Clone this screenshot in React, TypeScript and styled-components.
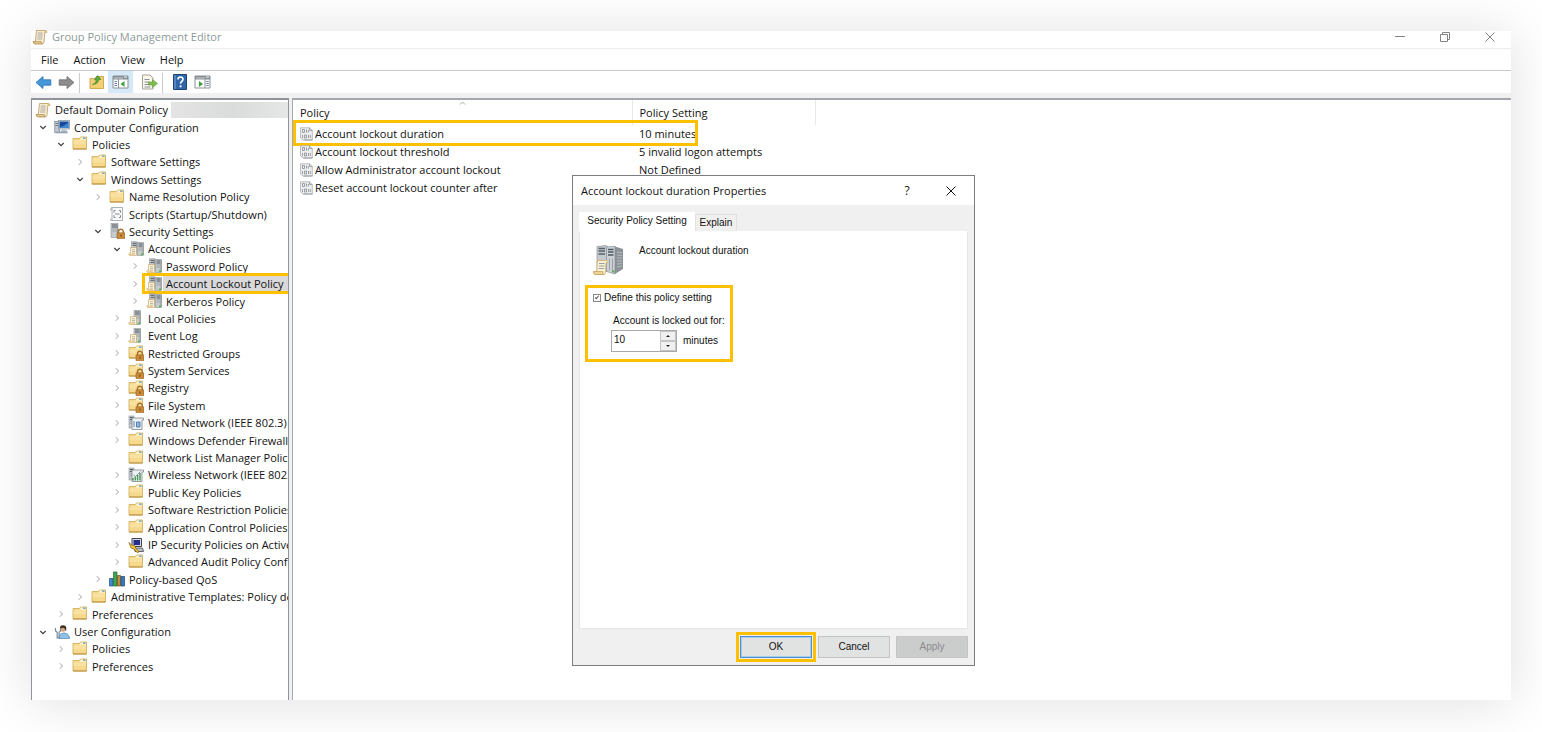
import React, { useState } from "react";
import styled, { createGlobalStyle } from "styled-components";

const ui = `"Open Sans", "Noto Sans", sans-serif`;
const classic = `"Liberation Sans", Arial, sans-serif`;
const accent = "#ffc000";

const GlobalStyle = createGlobalStyle`
  *, *::before, *::after { box-sizing: border-box; }
  body { margin: 0; background: #fff; color: #111; font: 11px/16px ${ui}; }
  button, input { font: inherit; color: inherit; margin: 0; padding: 0; border: 0; background: none; border-radius: 0; }
  svg { display: block; flex: none; }
`;

const Page = styled.div`
  display: flex;
  min-height: 100vh;
  padding: 31px 31px 32px;
`;

const AppWindow = styled.main`
  position: relative;
  flex: 1;
  min-width: 0;
  display: flex;
  flex-direction: column;
  background: #fff;
  box-shadow: 0 2px 50px rgba(0, 0, 0, 0.13);
`;

const TitleBar = styled.header`
  display: flex;
  align-items: center;
  gap: 4px;
  height: 18px;
  padding: 0 15px 5px 1px;
  border-bottom: 1px solid #ececec;
`;

const AppTitle = styled.h1`
  flex: 1;
  margin: 0;
  font-size: 11px;
  font-weight: 400;
  line-height: 14px;
  color: #8d9a9a;
`;

const WindowControls = styled.div`
  display: flex;
  gap: 33px;
`;

const ControlButton = styled.button`
  width: 12px;
  height: 12px;
  color: #858585;
`;

const MenuBar = styled.nav`
  display: flex;
  align-items: center;
  gap: 15px;
  height: 22px;
  padding-left: 10px;
  border-bottom: 1px solid #c3c5c9;
`;

const Toolbar = styled.div`
  display: flex;
  align-items: stretch;
  height: 22px;
  padding-left: 1px;
`;

const ToolButton = styled.button<{ $active?: boolean }>`
  display: flex;
  align-items: center;
  justify-content: center;
  width: ${(p) => (p.$active ? "25px" : "23px")};
  background: ${(p) => (p.$active ? "#d5e9f8" : "transparent")};
`;

const ToolDivider = styled.span`
  width: 1px;
  margin: 2px 5px 0 1px;
  background: #c9cacd;
`;

const ToolGroup = styled.div`
  display: flex;
  & + & {
    margin-left: 5px;
  }
`;

const Panes = styled.div`
  flex: 1;
  display: flex;
  gap: 3px;
  border-top: 5px solid #f0f0f0;
  background: #f0f0f0;
`;

const TreePane = styled.aside`
  flex: none;
  display: flex;
  width: 258px;
  padding: 1px 0 25px 3px;
  border: solid #8f939b;
  border-width: 2px 1px 0 1px;
  background: #fff;
  overflow: hidden;
`;

const TreeList = styled.ul`
  flex: 1;
  min-width: 0;
  margin: 0;
  padding: 0;
  list-style: none;
  display: grid;
  grid-auto-rows: minmax(17px, 1fr);
`;

const TreeRow = styled.li<{ $indent: number }>`
  display: flex;
  align-items: center;
  min-height: 0;
  padding-left: ${(p) => p.$indent}px;
  white-space: nowrap;
  line-height: 17px;
`;

const Twisty = styled.span`
  flex: none;
  display: flex;
  justify-content: center;
  width: 16px;
  margin-right: 3px;
`;

const Node = styled.span`
  position: relative;
  flex: 1;
  display: flex;
  align-items: center;
  gap: 1px;
`;

const NodeLabel = styled.span<{ $selected?: boolean }>`
  padding: 0 0 0 3px;
  background: ${(p) => (p.$selected ? "#d9d9d9" : "transparent")};
  flex: ${(p) => (p.$selected ? "1" : "none")};
`;

const Marker = styled.span<{ $inset: string; $width?: string }>`
  position: absolute;
  inset: ${(p) => p.$inset};
  width: ${(p) => p.$width ?? "auto"};
  border: 3px solid ${accent};
  pointer-events: none;
`;

const Redacted = styled.span`
  flex: 1;
  height: 16px;
  margin-left: 2px;
  background: linear-gradient(90deg, #e4e4e4, #dadbdb 50%, #e6e7e7 96%, #c9c9c9);
`;

const ListPane = styled.section`
  flex: 1;
  min-width: 0;
  border: solid #a5a7ae;
  border-width: 2px 0 0 1px;
  background: #fff;
`;

const PolicyTable = styled.table`
  border-collapse: collapse;
  table-layout: fixed;
  width: 522px;
`;

const HeadCell = styled.th<{ $width: number }>`
  position: relative;
  width: ${(p) => p.$width}px;
  height: 25px;
  padding: 0 7px;
  border-right: 1px solid #e8e8e8;
  font-weight: 400;
  text-align: left;
`;

const SortMark = styled.svg`
  position: absolute;
  top: 1px;
  left: 49%;
`;

const Cell = styled.td`
  height: 18px;
  padding: 0 7px;
  line-height: 18px;
  white-space: nowrap;
`;

const PolicyRow = styled.tr`
  position: relative;
`;

const PolicyName = styled.span`
  display: flex;
  align-items: center;
  gap: 2px;
`;

const Dialog = styled.section`
  position: absolute;
  top: 144px;
  left: 541px;
  display: flex;
  flex-direction: column;
  width: 403px;
  height: 491px;
  border: 1px solid #7d7d7d;
  background: #f0f0f0;
  font: 10px/14px ${classic};
`;

const DialogHeader = styled.header`
  display: flex;
  align-items: center;
  height: 29px;
  padding: 0 17px 0 8px;
  background: #fff;
  font: 11px/16px ${ui};
`;

const DialogTitle = styled.h2`
  flex: 1;
  margin: 0;
  font-size: 11px;
  font-weight: 400;
`;

const DialogControl = styled.button`
  display: flex;
  align-items: center;
  justify-content: center;
  width: 12px;
  height: 16px;
  margin-left: 32px;
  font-size: 12px;
`;

const DialogBody = styled.div`
  flex: 1;
  display: flex;
  flex-direction: column;
  padding: 7px 6px;
`;

const TabStrip = styled.div`
  display: flex;
  align-items: flex-end;
`;

const Tab = styled.button<{ $active?: boolean }>`
  height: ${(p) => (p.$active ? "19px" : "17px")};
  width: ${(p) => (p.$active ? "116px" : "42px")};
  padding-bottom: ${(p) => (p.$active ? "2px" : "0")};
  border: 1px solid ${(p) => (p.$active ? "#fff" : "#e2e2e2")};
  border-bottom: 0;
  background: ${(p) => (p.$active ? "#fff" : "#f0f0f0")};
  white-space: nowrap;
`;

const TabPage = styled.div`
  flex: 1;
  padding: 10px 5px;
  border: 1px solid #e6e6e6;
  border-top-color: #fff;
  background: #fff;
`;

const PolicyHeading = styled.div`
  display: flex;
  gap: 14px;
  height: 43px;
  padding-left: 8px;
`;

const PolicyCaption = styled.span`
  padding-top: 2px;
`;

const SettingBox = styled.fieldset`
  display: flex;
  flex-direction: column;
  gap: 9px;
  width: 148px;
  height: 77px;
  margin: 0;
  padding: 3px 0 0 5px;
  border: 3px solid ${accent};
  white-space: nowrap;
`;

const CheckLabel = styled.label`
  display: flex;
  align-items: center;
  gap: 3px;
`;

const CheckBox = styled.input`
  appearance: none;
  position: relative;
  width: 8px;
  height: 8px;
  border: 1px solid #888;
  background: #fff;
  &:checked::after {
    content: "";
    position: absolute;
    top: 0;
    left: 2px;
    width: 2px;
    height: 4px;
    border: solid #555;
    border-width: 0 1px 1px 0;
    transform: rotate(40deg);
  }
`;

const DurationField = styled.div`
  display: flex;
  flex-direction: column;
  gap: 2px;
  padding-left: 18px;
`;

const FieldLabel = styled.label`
  padding-left: 2px;
`;

const SpinRow = styled.div`
  display: flex;
  align-items: center;
  gap: 6px;
`;

const Spinner = styled.div`
  display: flex;
  width: 66px;
  height: 22px;
  border: 1px solid #a9a9a9;
  background: #fff;
`;

const SpinInput = styled.input`
  flex: 1;
  min-width: 0;
  padding: 0 2px 3px;
  outline: 0;
`;

const SpinButtons = styled.div`
  display: flex;
  flex-direction: column;
  width: 16px;
`;

const SpinButton = styled.button`
  flex: 1;
  display: flex;
  align-items: center;
  justify-content: center;
  border: 1px solid #c4c4c4;
  background: #f0f0f0;
`;

const DialogFooter = styled.footer`
  display: flex;
  justify-content: flex-end;
  gap: 6px;
  padding-top: 7px;
`;

const PushButton = styled.button<{ $primary?: boolean }>`
  position: relative;
  width: 72px;
  height: 22px;
  border: ${(p) => (p.$primary ? "1px solid #4a8fd0" : "1px solid #c2c4c4")};
  box-shadow: ${(p) => (p.$primary ? "inset 0 0 0 1px #a9cbec" : "none")};
  background: #e1e3e3;
  &:disabled {
    border-color: #c6c6c6;
    background: #cbcccc;
    color: #8b8b8b;
  }
`;

type IconName =
  | "scroll" | "computer" | "folder" | "script" | "serverLock" | "servers"
  | "server" | "folderLock" | "wired" | "wireless" | "ipsec" | "chart" | "user";

const FolderShape = () => (
  <>
    <path d="M1 13V2.500h6.500l1-1.500H14.500V13z" fill="#f6d98c" stroke="#cfa853" strokeWidth=".8" />
    <path d="M8.800 1.500h5.200v2.300H7.600z" fill="#fff3cd" />
    <path d="M11 1.400h2.600v1.500H11z" fill="#6fa8c9" />
    <path d="M1.500 4.200h12.500v4H1.500z" fill="#fbe6a9" opacity=".7" />
    <path d="M1 13h13.500" stroke="#b98f3f" />
  </>
);

const LockShape = () => (
  <>
    <path d="M9.500 10V8.600a2.400 2.400 0 0 1 4.800 0V10" fill="none" stroke="#a87226" strokeWidth="1.400" />
    <rect x="8" y="9.800" width="8" height="6" rx=".5" fill="#c98a3a" stroke="#95622a" strokeWidth=".6" />
    <path d="M12 11.500v2.200" stroke="#6b430f" />
  </>
);

const Tower = ({ x, y, w, h }: { x: number; y: number; w: number; h: number }) => (
  <>
    <rect x={x} y={y} width={w} height={h} fill="#c6cbce" stroke="#8a9196" strokeWidth=".6" />
    <path d={`M${x + 1} ${y + 1.5}h${w - 2}M${x + 1} ${y + 3.5}h${w - 2}`} stroke="#4f575d" />
    <path d={`M${x + 1} ${y + 5.5}h${w - 2}M${x + 1} ${y + 7.5}h${w - 2}`} stroke="#9299a0" strokeWidth=".8" />
    <path d={`M${x + w - 0.5} ${y + 1}v${h - 2}`} stroke="#8c9499" strokeWidth=".9" />
  </>
);

const MiniScroll = () => (
  <>
    <path d="M2.500 6.500h6v8H1.500Q.3 14 1 12.500h1.500z" fill="#fbf0d4" stroke="#c9ac74" strokeWidth=".7" />
    <path d="M4 8.700h3M4 10.500h3M4 12.200h3" stroke="#a8a498" strokeWidth=".7" />
    <path d="M1 13h5.500l.8 1.600H1.600z" fill="#e9cf93" />
  </>
);

const ScrollShape = () => (
  <>
    <path d="M4.500 1.500h9.300q1.200.2 1 2h-2l-.8 9.500q-.2 1.800-2 1.800H3Q1 14.500 1.300 12.500h2z" fill="#f7ebcf" stroke="#b79a60" strokeWidth=".8" />
    <path d="M1.400 12.600h7.800q0 2 1.200 2.200H3q-1.700-.3-1.600-2.200z" fill="#e7cf94" stroke="#b08d4b" strokeWidth=".7" />
    <path d="M12.600 3.500q-.2-1.800 1.100-2 1.300.3 1.100 2z" fill="#dcbf7d" />
    <path d="M5.800 4h5M5.600 6h5M5.400 8h5M5.200 10h5" stroke="#9a9aa5" strokeWidth=".8" />
  </>
);

const shapes: Record<IconName, React.ReactNode> = {
  scroll: <ScrollShape />,
  computer: (
    <>
      <rect x=".8" y="2.500" width="4.500" height="11" fill="#c4cbd1" stroke="#727c86" strokeWidth=".7" />
      <path d="M1.500 4.500h3M1.500 6.500h3" stroke="#59636d" strokeWidth=".8" />
      <rect x="4.500" y="1.500" width="11" height="8.500" fill="#dbe4ec" stroke="#7b8894" strokeWidth=".7" />
      <path d="M5.500 2.500h9v6.500h-9z" fill="#174a9c" />
      <path d="M5.500 8q5-.5 9-5v6h-9z" fill="#3f87d3" />
      <path d="M8 10.500h4l1.500 3h-7z" fill="#b7c1ca" />
      <path d="M2 12.500h11.500v1.800H2z" fill="#8fa3b5" />
    </>
  ),
  folder: <FolderShape />,
  script: (
    <>
      <path d="M3 1.500h10.500v13H3z" fill="#f7f8f8" stroke="#9b9ea1" strokeWidth=".8" />
      <path d="M3 1.500Q1.200 2 1.800 4H3M3 14.500H1.800Q1 13 2.500 12.500H3" fill="#e3e5e6" stroke="#9b9ea1" strokeWidth=".8" />
      <path d="M6.500 4.500H5v2.200M10 4.500h1.500v2.200M6.500 11.500H5V9.300M10 11.500h1.500V9.300M6 8h4.500" fill="none" stroke="#85888c" />
    </>
  ),
  serverLock: (
    <>
      <Tower x={2} y={0.5} w={7} h={14} />
      <LockShape />
    </>
  ),
  servers: (
    <>
      <Tower x={3.5} y={0.8} w={5.5} h={12} />
      <Tower x={9.5} y={1.5} w={6} h={13} />
      <MiniScroll />
      <path d="M13 12.500h2.200v1.600H13z" fill="#58b947" />
    </>
  ),
  server: (
    <>
      <Tower x={6} y={0.5} w={6.5} h={14} />
      <MiniScroll />
      <path d="M10 12.500h2.200v1.600H10z" fill="#58b947" />
    </>
  ),
  folderLock: (
    <>
      <FolderShape />
      <LockShape />
    </>
  ),
  wired: (
    <>
      <Tower x={1} y={1} w={5} h={12} />
      <path d="M4 3h11.500v2H14v9.500H4z" fill="#eef1f3" stroke="#7c858c" strokeWidth=".8" />
      <path d="M6 6v6M8.500 7h3.500v5H8.500z" fill="#8fb4da" stroke="#4b7cae" strokeWidth=".9" />
    </>
  ),
  wireless: (
    <>
      <Tower x={1} y={1} w={5} h={12} />
      <path d="M4 3h11.500v2H14v9.500H4z" fill="#eef1f3" stroke="#7c858c" strokeWidth=".8" />
      <path d="M5 13.500v-2.500M7.300 13.500v-4M9.600 13.500v-5.500M12 13.500v-7.500" stroke="#4b9a59" strokeWidth="1.500" />
      <path d="M5.500 8l2 1.500 5-5" stroke="#8a9399" fill="none" />
    </>
  ),
  ipsec: (
    <>
      <path d="M4 1.500h9.500v8H4z" fill="#d9d9dc" stroke="#45454d" />
      <path d="M5.500 3h6.500v5H5.500z" fill="#23308f" />
      <path d="M6 11h8.500l1 3.500H7z" fill="#bfc0c5" stroke="#45454d" strokeWidth=".8" />
      <path d="M1 5.500l2.500 2.500 3 .5 1.500 3 3 3.500-2 .5-3-3.500-3-1z" fill="#f5c838" stroke="#7c5d10" strokeWidth=".7" />
    </>
  ),
  chart: (
    <>
      <path d="M.5 7.500h3.500V15H.5z" fill="#3f88d0" stroke="#1f4f86" strokeWidth=".7" />
      <path d="M4.500 1h3.500v14H4.500z" fill="#3fa950" stroke="#1d6630" strokeWidth=".7" />
      <path d="M8.500 4.500h3V15h-3z" fill="#c68a3e" stroke="#6f4a19" strokeWidth=".7" />
      <path d="M12 5.500h3.500V15H12z" fill="#377bc0" stroke="#1a3f6b" strokeWidth=".7" />
    </>
  ),
  user: (
    <>
      <path d="M5 14.500q0-5.500 5-5.500t5.500 5.500z" fill="#8fc0e6" stroke="#4d83b3" strokeWidth=".7" />
      <circle cx="9" cy="4.800" r="3" fill="#d8a47c" />
      <path d="M6 4.500Q5.800 1.200 9 1.200t3.400 3.300q0 1.500-1.200 2.500.2-3-2-3.300z" fill="#3e3027" />
      <path d="M1.500 4v3l1.700 1.200V14h1.900V8.200L6.500 7V4" fill="none" stroke="#76899a" strokeWidth="1.200" />
    </>
  ),
};

const Icon = ({ name }: { name: IconName }) => (
  <svg width="16" height="16" viewBox="0 0 16 16" aria-hidden="true">{shapes[name]}</svg>
);

const Chevron = ({ open }: { open: boolean }) => (
  <svg width="8" height="8" viewBox="0 0 8 8" fill="none" aria-hidden="true">
    {open ? <path d="M1.300 3L4 5.600 6.700 3" stroke="#404040" strokeWidth="1.200" /> : <path d="M2.800 1.200L5.500 4 2.800 6.800" stroke="#a0a0a0" />}
  </svg>
);

const PolicyIcon = () => (
  <svg width="13" height="14" viewBox="0 0 13 14" fill="none" aria-hidden="true">
    <path d="M.5.800h9L12.300 3.500v9.700H3.500L.5 11z" fill="#eceeef" stroke="#b3b6ba" strokeWidth=".9" />
    <path d="M9.500.8v2.700h2.800M3.500 13l9-.2" stroke="#a0a3a7" />
    <path d="M2.500 2.500h2v3h-2zM6.500 2.500v3M8.300 3v2.500M2.500 8v3M4.500 8h2v3h-2zM8.500 8v3M10.300 8v3" stroke="#9a9ea3" />
  </svg>
);

const Arrow = ({ back }: { back?: boolean }) => (
  <svg width="17" height="15" viewBox="0 0 17 15" aria-hidden="true">
    {back ? (
      <path d="M1 7.500L8 1.500v3.300h7.800v5.400H8v3.300z" fill="#4497d8" stroke="#2a74b4" strokeWidth=".8" />
    ) : (
      <path d="M16 7.500L9 1.500v3.300H1.200v5.400H9v3.300z" fill="#8d8d8d" stroke="#6d6d6d" strokeWidth=".8" />
    )}
  </svg>
);

const UpFolderIcon = () => (
  <svg width="16" height="16" viewBox="0 0 16 16" aria-hidden="true">
    <path d="M1 14.500V4.500h5l1.500-2h7v12z" fill="#f3ce72" stroke="#c79b3f" strokeWidth=".8" />
    <path d="M3.500 10.500q3.500-1 4-4.500H5.500L8.500 1.500l3.500 4H9.800q-.8 4.800-6.300 5z" fill="#55ad3d" stroke="#35822a" strokeWidth=".6" />
  </svg>
);

const ConsoleIcon = ({ flip }: { flip?: boolean }) => (
  <svg width="17" height="14" viewBox="0 0 17 14" aria-hidden="true">
    <path d="M1 1h15v12H1z" fill="#fff" stroke="#8b9298" />
    <path d="M1 1h15v3.500H1z" fill="#868e95" />
    <path d="M2 3h9" stroke="#c9ced2" />
    <path d="M12 2h3" stroke="#fff" />
    {flip ? (
      <>
        <path d="M11 4v9" stroke="#8b9298" />
        <path d="M12.300 6.500h2.500M12.300 8.500h2.500M12.300 10.500h2.500" stroke="#6b86a5" />
        <path d="M5 6l4 3-4 3z" fill="#3da23b" />
      </>
    ) : (
      <>
        <path d="M6.500 4v9" stroke="#8b9298" />
        <path d="M2.500 6.500h2.500M2.500 8.500h2.500M2.500 10.500h2.500" stroke="#6b86a5" />
        <path d="M12.500 6l-4 3 4 3z" fill="#3da23b" />
      </>
    )}
  </svg>
);

const ExportIcon = () => (
  <svg width="17" height="16" viewBox="0 0 17 16" aria-hidden="true">
    <path d="M1.500 1h7.500l3 3v11H1.500z" fill="#fbf8ea" stroke="#9b9a8c" strokeWidth=".9" />
    <path d="M3.500 5.500h5M3.500 8h4.500M3.500 10.500h4.500M3.500 13h6" stroke="#8792a0" />
    <path d="M7.500 8h4V5.500l5 4-5 4V11h-4z" fill="#84bd4f" stroke="#5a9636" strokeWidth=".6" />
  </svg>
);

const HelpIcon = () => (
  <svg width="14" height="16" viewBox="0 0 14 16" aria-hidden="true">
    <path d="M.5.500h13v15H.5z" fill="#2f66a8" stroke="#1d447a" />
    <path d="M2 1v14" stroke="#7fa6d5" />
    <path d="M5 5.500q0-2.500 2.500-2.500T10 5.300q0 1.400-1.400 2.200-1 .6-1 2.200" fill="none" stroke="#fff" strokeWidth="1.600" />
    <circle cx="7.600" cy="12.300" r="1.100" fill="#fff" />
  </svg>
);

const LargeServerIcon = () => (
  <svg width="32" height="34" viewBox="0 -2 32 34" aria-hidden="true">
    <path d="M4 2.500l9-1 2 1.500v24l-3 1H4z" fill="#c3c9cd" stroke="#8f979c" strokeWidth=".7" />
    <path d="M5.500 4.500h6.500M5.500 7h6.500M5.500 10h6.500" stroke="#59636b" strokeWidth="1.400" />
    <path d="M22 2.500l8 2.500v20l-8 5z" fill="#8b9399" />
    <path d="M24 8l5 .8M24 11l5 .5M24 14h5M24 17h5M24 20l5-.5M24 23l5-1" stroke="#b5bbbf" />
    <path d="M13.500 3l8.500-.8V30l-8.500-2.500z" fill="#ccd1d5" stroke="#858e94" strokeWidth=".7" />
    <path d="M15 5.500h5.500M15 8h5.500M15 11h5.500" stroke="#4d575e" strokeWidth="1.500" />
    <path d="M16.500 14.500v12M19.500 14.500v13" stroke="#99a1a6" />
    <path d="M19 26.500h2.500v2H19z" fill="#56b648" />
    <path d="M4.500 16.500h9q2 .3 1.500 2h-2l-.5 10q-.3 2-2 2H2Q.2 30 .8 27.500h3z" fill="#fbf1d3" stroke="#d2b377" strokeWidth=".9" />
    <path d="M6 19.500h5.500M6 22h5.500M5.600 24.500h5.500" stroke="#98a0ab" />
    <path d="M.8 27.500h9q0 2.500 1.300 3H2Q.3 30 .8 27.500z" fill="#edd196" stroke="#c89d55" strokeWidth=".7" />
  </svg>
);

const CloseIcon = () => (
  <svg width="12" height="12" viewBox="0 0 12 12" fill="none" stroke="currentColor" aria-hidden="true">
    <path d="M1.500 1.500l9 9M10.500 1.500l-9 9" />
  </svg>
);

interface TreeItem {
  depth: number;
  icon: IconName;
  label: string;
  open?: boolean;
  leaf?: boolean;
  selected?: boolean;
}

const tree: TreeItem[] = [
  { depth: 0, icon: "computer", label: "Computer Configuration", open: true },
  { depth: 1, icon: "folder", label: "Policies", open: true },
  { depth: 2, icon: "folder", label: "Software Settings" },
  { depth: 2, icon: "folder", label: "Windows Settings", open: true },
  { depth: 3, icon: "folder", label: "Name Resolution Policy" },
  { depth: 3, icon: "script", label: "Scripts (Startup/Shutdown)", leaf: true },
  { depth: 3, icon: "serverLock", label: "Security Settings", open: true },
  { depth: 4, icon: "servers", label: "Account Policies", open: true },
  { depth: 5, icon: "servers", label: "Password Policy" },
  { depth: 5, icon: "servers", label: "Account Lockout Policy", selected: true },
  { depth: 5, icon: "servers", label: "Kerberos Policy" },
  { depth: 4, icon: "server", label: "Local Policies" },
  { depth: 4, icon: "server", label: "Event Log" },
  { depth: 4, icon: "folderLock", label: "Restricted Groups" },
  { depth: 4, icon: "folderLock", label: "System Services" },
  { depth: 4, icon: "folderLock", label: "Registry" },
  { depth: 4, icon: "folderLock", label: "File System" },
  { depth: 4, icon: "wired", label: "Wired Network (IEEE 802.3) P" },
  { depth: 4, icon: "folder", label: "Windows Defender Firewall" },
  { depth: 4, icon: "folder", label: "Network List Manager Polici", leaf: true },
  { depth: 4, icon: "wireless", label: "Wireless Network (IEEE 802.1" },
  { depth: 4, icon: "folder", label: "Public Key Policies" },
  { depth: 4, icon: "folder", label: "Software Restriction Policies" },
  { depth: 4, icon: "folder", label: "Application Control Policies" },
  { depth: 4, icon: "ipsec", label: "IP Security Policies on Active" },
  { depth: 4, icon: "folder", label: "Advanced Audit Policy Conf" },
  { depth: 3, icon: "chart", label: "Policy-based QoS" },
  { depth: 2, icon: "folder", label: "Administrative Templates: Policy de" },
  { depth: 1, icon: "folder", label: "Preferences" },
  { depth: 0, icon: "user", label: "User Configuration", open: true },
  { depth: 1, icon: "folder", label: "Policies" },
  { depth: 1, icon: "folder", label: "Preferences" },
];

const indents = [0, 18, 37, 55, 74, 92];

const policies = [
  { name: "Account lockout duration", setting: "10 minutes" },
  { name: "Account lockout threshold", setting: "5 invalid logon attempts" },
  { name: "Allow Administrator account lockout", setting: "Not Defined" },
  { name: "Reset account lockout counter after", setting: "" },
];

function PolicyTree() {
  return (
    <TreePane>
      <TreeList role="tree" aria-label="Console tree">
        <TreeRow $indent={0} role="treeitem">
          <Node>
            <Icon name="scroll" />
            <NodeLabel>Default Domain Policy</NodeLabel>
            <Redacted />
          </Node>
        </TreeRow>
        {tree.map((item, i) => (
          <TreeRow key={i} $indent={indents[item.depth]} role="treeitem" aria-selected={!!item.selected}>
            <Twisty>{!item.leaf && <Chevron open={!!item.open} />}</Twisty>
            <Node>
              <Icon name={item.icon} />
              <NodeLabel $selected={item.selected}>{item.label}</NodeLabel>
              {item.selected && <Marker $inset="-2px -1px -2px -4px" />}
            </Node>
          </TreeRow>
        ))}
      </TreeList>
    </TreePane>
  );
}

function PolicyList() {
  return (
    <ListPane>
      <PolicyTable>
        <thead>
          <tr>
            <HeadCell $width={339} scope="col">
              Policy
              <SortMark width="7" height="5" viewBox="0 0 7 5" fill="none">
                <path d="M1 3.500L3.500 1 6 3.500" stroke="#999" strokeWidth=".9" />
              </SortMark>
            </HeadCell>
            <HeadCell $width={183} scope="col">Policy Setting</HeadCell>
          </tr>
        </thead>
        <tbody>
          {policies.map((p, i) => (
            <PolicyRow key={p.name}>
              <Cell>
                <PolicyName><PolicyIcon />{p.name}</PolicyName>
                {i === 0 && <Marker $inset="-5px auto -3px 0" $width="405px" />}
              </Cell>
              <Cell>{p.setting}</Cell>
            </PolicyRow>
          ))}
        </tbody>
      </PolicyTable>
    </ListPane>
  );
}

function PropertiesDialog() {
  const [defined, setDefined] = useState(true);
  const [minutes, setMinutes] = useState(10);
  return (
    <Dialog role="dialog" aria-labelledby="dialog-title">
      <DialogHeader>
        <DialogTitle id="dialog-title">Account lockout duration Properties</DialogTitle>
        <DialogControl aria-label="Help">?</DialogControl>
        <DialogControl aria-label="Close"><CloseIcon /></DialogControl>
      </DialogHeader>
      <DialogBody>
        <TabStrip role="tablist">
          <Tab $active role="tab" aria-selected="true">Security Policy Setting</Tab>
          <Tab role="tab" aria-selected="false">Explain</Tab>
        </TabStrip>
        <TabPage role="tabpanel">
          <PolicyHeading>
            <LargeServerIcon />
            <PolicyCaption>Account lockout duration</PolicyCaption>
          </PolicyHeading>
          <SettingBox>
            <CheckLabel>
              <CheckBox type="checkbox" checked={defined} onChange={(e) => setDefined(e.target.checked)} />
              Define this policy setting
            </CheckLabel>
            <DurationField>
              <FieldLabel htmlFor="duration">Account is locked out for:</FieldLabel>
              <SpinRow>
                <Spinner>
                  <SpinInput id="duration" type="text" value={minutes} onChange={(e) => setMinutes(Number(e.target.value) || 0)} />
                  <SpinButtons>
                    <SpinButton aria-label="Increase" onClick={() => setMinutes(minutes + 1)}>
                      <svg width="4" height="2" viewBox="0 0 4 2"><path d="M0 2L2 0 4 2z" fill="#222" /></svg>
                    </SpinButton>
                    <SpinButton aria-label="Decrease" onClick={() => setMinutes(Math.max(0, minutes - 1))}>
                      <svg width="4" height="2" viewBox="0 0 4 2"><path d="M0 0L2 2 4 0z" fill="#222" /></svg>
                    </SpinButton>
                  </SpinButtons>
                </Spinner>
                minutes
              </SpinRow>
            </DurationField>
          </SettingBox>
        </TabPage>
        <DialogFooter>
          <PushButton $primary>OK<Marker $inset="-5px" /></PushButton>
          <PushButton>Cancel</PushButton>
          <PushButton disabled>Apply</PushButton>
        </DialogFooter>
      </DialogBody>
    </Dialog>
  );
}

export default function App() {
  return (
    <>
      <GlobalStyle />
      <Page>
        <AppWindow>
          <TitleBar>
            <Icon name="scroll" />
            <AppTitle>Group Policy Management Editor</AppTitle>
            <WindowControls>
              <ControlButton aria-label="Minimize">
                <svg width="12" height="12" viewBox="0 0 12 12" stroke="currentColor"><path d="M1 5.500h10" /></svg>
              </ControlButton>
              <ControlButton aria-label="Restore">
                <svg width="12" height="12" viewBox="0 0 12 12" fill="none" stroke="currentColor">
                  <path d="M1.500 3.500h7v7h-7zM3.500 3.500v-2h7v7h-2" />
                </svg>
              </ControlButton>
              <ControlButton aria-label="Close"><CloseIcon /></ControlButton>
            </WindowControls>
          </TitleBar>
          <MenuBar>
            <button>File</button>
            <button>Action</button>
            <button>View</button>
            <button>Help</button>
          </MenuBar>
          <Toolbar>
            <ToolGroup>
              <ToolButton aria-label="Back"><Arrow back /></ToolButton>
              <ToolButton aria-label="Forward"><Arrow /></ToolButton>
            </ToolGroup>
            <ToolDivider />
            <ToolGroup>
              <ToolButton aria-label="Up one level"><UpFolderIcon /></ToolButton>
              <ToolButton $active aria-label="Show console tree"><ConsoleIcon /></ToolButton>
            </ToolGroup>
            <ToolGroup>
              <ToolButton aria-label="Export list"><ExportIcon /></ToolButton>
            </ToolGroup>
            <ToolDivider />
            <ToolGroup>
              <ToolButton aria-label="Help"><HelpIcon /></ToolButton>
              <ToolButton aria-label="Show action pane"><ConsoleIcon flip /></ToolButton>
            </ToolGroup>
          </Toolbar>
          <Panes>
            <PolicyTree />
            <PolicyList />
          </Panes>
          <PropertiesDialog />
        </AppWindow>
      </Page>
    </>
  );
}
